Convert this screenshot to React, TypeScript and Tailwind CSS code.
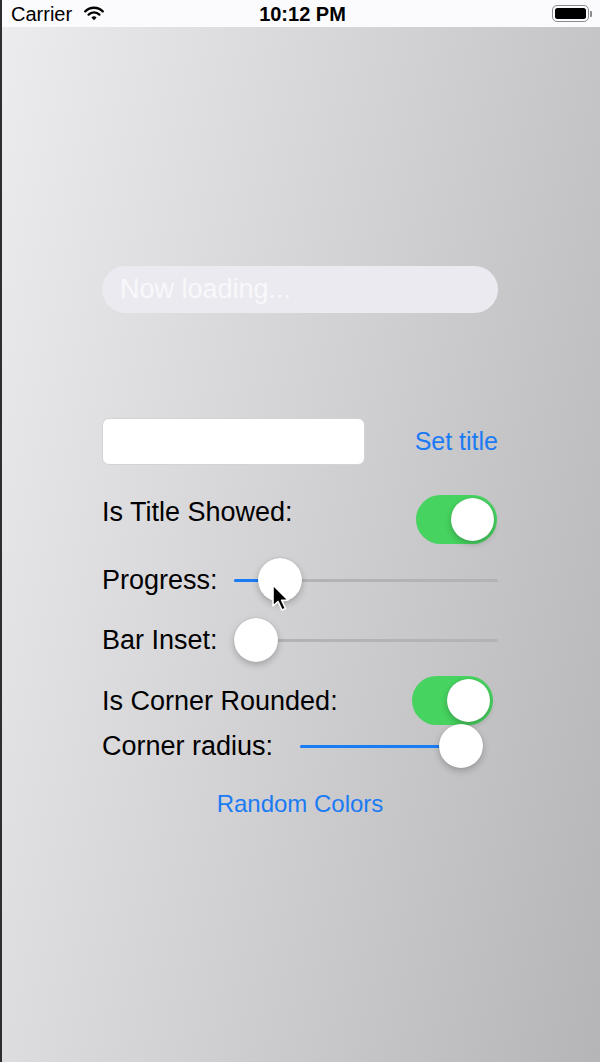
function Wifi() {
  return (
    <svg width="20" height="15" viewBox="0 0 20 15" className="ml-[12px]">
      <path d="M1.3 5.4 A12.2 12.2 0 0 1 18.7 5.4" fill="none" stroke="#000" strokeWidth="2.3" strokeLinecap="round" />
      <path d="M4.6 8.6 A7.6 7.6 0 0 1 15.4 8.6" fill="none" stroke="#000" strokeWidth="2.3" strokeLinecap="round" />
      <path d="M7.4 11.5 A3.7 3.7 0 0 1 12.6 11.5 L10 14.2 Z" fill="#000" />
    </svg>
  );
}

function Battery() {
  return (
    <div className="flex items-center">
      <div className="flex h-[17px] w-[37px] items-center rounded-[5px] border-[1.5px] border-[#8b8a8e] p-[2px]">
        <div className="h-full w-full rounded-[2.5px] bg-black" />
      </div>
      <div className="ml-[1px] h-[6px] w-[2px] rounded-r-[1px] bg-[#8b8a8e]" />
    </div>
  );
}

function StatusBar() {
  return (
    <div className="grid h-[27px] grid-cols-3 items-center bg-[#fbfafc] text-[20px] text-black">
      <div className="flex items-center pl-[9px]">
        <span className="leading-none">Carrier</span>
        <Wifi />
      </div>
      <div className="pl-[3px] text-center font-semibold leading-none">10:12 PM</div>
      <div className="flex justify-end pr-[8px]">
        <Battery />
      </div>
    </div>
  );
}

function Switch({ className = "" }: { className?: string }) {
  return (
    <div className={`flex h-[49px] w-[81px] items-center justify-end rounded-full bg-[#46d35f] px-[3px] ${className}`}>
      <div className="h-[43px] w-[43px] rounded-full bg-white shadow-[0_3px_6px_rgba(0,0,0,0.22),0_0_1px_rgba(0,0,0,0.2)]" />
    </div>
  );
}

function Slider({ width, value }: { width: number; value: number }) {
  const knobLeft = value * (width - 44);
  return (
    <div className="relative h-[44px]" style={{ width }}>
      <div className="absolute inset-x-0 top-[20.5px] h-[3px] rounded-full bg-[#b3b2b5]" />
      <div className="absolute left-0 top-[20.5px] h-[3px] rounded-full bg-[#1a7cf5]" style={{ width: knobLeft + 22 }} />
      <div
        className="absolute top-0 h-[44px] w-[44px] rounded-full bg-white shadow-[0_3px_7px_rgba(0,0,0,0.22),0_0_1px_rgba(0,0,0,0.25)]"
        style={{ left: knobLeft }}
      />
    </div>
  );
}

function Cursor() {
  return (
    <svg width="22" height="30" viewBox="0 0 22 30" className="absolute left-[269px] top-[556px]">
      <path d="M2 2 L2 23 L7 18.5 L11 27 L14.5 25.5 L10.6 17.2 L17 17 Z" fill="#000" stroke="#fff" strokeWidth="1.6" strokeLinejoin="round" />
    </svg>
  );
}

export default function App() {
  return (
    <div className="flex h-[1062px] w-[600px] flex-col overflow-hidden border-l-2 border-[#2e2e30] font-['Liberation_Sans',Arial,sans-serif] text-black">
      <StatusBar />
      <main className="relative flex flex-1 flex-col bg-[linear-gradient(103deg,#ececee_0%,#d1d0d3_50%,#b5b4b7_100%)]">
        <div className="ml-[100px] mt-[239px] flex w-[396px] flex-col">
          <div className="flex h-[47px] items-center rounded-full bg-[#ebeaf0] px-[18px] text-[27px] text-[#f8f8fb]">
            Now loading...
          </div>

          <div className="mt-[105px] flex items-center justify-between">
            <div className="h-[47px] w-[263px] rounded-[7px] border border-[#d3d2d6] bg-white" />
            <button className="text-[25px] leading-none text-[#1b7bf4]">Set title</button>
          </div>

          <div className="mt-[30px] flex h-[50px] items-start justify-between">
            <span className="mt-[1px] text-[27px] leading-[32px]">Is Title Showed:</span>
            <Switch className="mr-[1px]" />
          </div>

          <div className="mt-[13px] flex h-[44px] items-center">
            <span className="w-[132px] text-[27px] leading-[32px]">Progress:</span>
            <Slider width={264} value={0.11} />
          </div>

          <div className="mt-[16px] flex h-[44px] items-center">
            <span className="w-[132px] text-[27px] leading-[32px]">Bar Inset:</span>
            <Slider width={264} value={0} />
          </div>

          <div className="mt-[14px] flex h-[49px] items-center justify-between">
            <span className="text-[27px] leading-[32px]">Is Corner Rounded:</span>
            <Switch className="mr-[5px]" />
          </div>

          <div className="mt-[-1px] flex h-[44px] items-center">
            <span className="w-[198px] text-[27px] leading-[32px]">Corner radius:</span>
            <Slider width={183} value={1} />
          </div>

          <button className="mt-[22px] self-center text-[24px] leading-[28px] text-[#1b7bf4]">Random Colors</button>
        </div>
        <Cursor />
      </main>
    </div>
  );
}
